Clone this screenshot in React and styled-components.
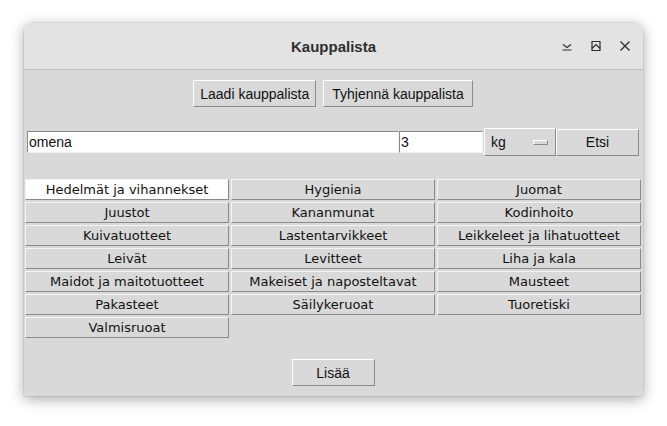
import React from "react";
import styled, { createGlobalStyle } from "styled-components";

const GlobalStyle = createGlobalStyle`
  html, body {
    margin: 0;
    padding: 0;
    background: #ffffff;
  }
`;

const categories = [
  "Hedelmät ja vihannekset",
  "Hygienia",
  "Juomat",
  "Juustot",
  "Kananmunat",
  "Kodinhoito",
  "Kuivatuotteet",
  "Lastentarvikkeet",
  "Leikkeleet ja lihatuotteet",
  "Leivät",
  "Levitteet",
  "Liha ja kala",
  "Maidot ja maitotuotteet",
  "Makeiset ja naposteltavat",
  "Mausteet",
  "Pakasteet",
  "Säilykeruoat",
  "Tuoretiski",
  "Valmisruoat",
];

function App() {
  return (
    <Page>
      <GlobalStyle />
      <Window>
        <TitleBar>
          <span />
          <Title>Kauppalista</Title>
          <Controls>
            <svg width="12" height="12" viewBox="0 0 12 12">
              <path d="M2 4.5 L6 7.5 L10 4.5 M1.5 10 H10.5" fill="none" stroke="#2e2e2e" strokeWidth="1.2" />
            </svg>
            <svg width="12" height="12" viewBox="0 0 12 12">
              <path d="M2 1.5 H10 V10.5 H2 Z M2 8.5 L6 4.5 L10 8.5" fill="none" stroke="#2e2e2e" strokeWidth="1.2" />
            </svg>
            <svg width="12" height="12" viewBox="0 0 12 12">
              <path d="M1.5 1.5 L10.5 10.5 M10.5 1.5 L1.5 10.5" fill="none" stroke="#2e2e2e" strokeWidth="1.4" />
            </svg>
          </Controls>
        </TitleBar>
        <Body>
          <TopRow>
            <Button>Laadi kauppalista</Button>
            <Button $pad={8}>Tyhjennä kauppalista</Button>
          </TopRow>
          <SearchRow>
            <Entry $width={372} defaultValue="omena" />
            <Entry $width={84} defaultValue="3" />
            <MenuButton>
              kg
              <Indicator />
            </MenuButton>
            <Button $width={83}>Etsi</Button>
          </SearchRow>
          <Grid>
            {categories.map((c, i) => (
              <Category key={c} $active={i === 0}>
                {c}
              </Category>
            ))}
          </Grid>
          <BottomRow>
            <Button $width={83}>Lisää</Button>
          </BottomRow>
        </Body>
      </Window>
    </Page>
  );
}

export default App;

const Page = styled.div`
  padding: 23px 24px 30px 24px;
`;

const Window = styled.div`
  width: 619px;
  border-radius: 8px 8px 0 0;
  overflow: hidden;
  box-shadow: 0 3px 14px rgba(0, 0, 0, 0.35), 0 0 0 1px rgba(0, 0, 0, 0.06);
`;

const TitleBar = styled.div`
  height: 46px;
  display: grid;
  grid-template-columns: 1fr auto 1fr;
  align-items: center;
  background: #e3e3e3;
  border-bottom: 1px solid #c2c2c2;
`;

const Title = styled.span`
  font-family: "Liberation Sans", sans-serif;
  font-weight: bold;
  font-size: 15px;
  color: #2e2e2e;
`;

const Controls = styled.div`
  display: flex;
  justify-content: flex-end;
  align-items: center;
  gap: 17px;
  padding-right: 12px;
`;

const Body = styled.div`
  background: #d9d9d9;
  padding: 10px 2px 10px 1px;
  display: flex;
  flex-direction: column;
`;

const TopRow = styled.div`
  display: flex;
  justify-content: center;
  gap: 7px;
`;

const Button = styled.button`
  box-sizing: border-box;
  height: 27px;
  width: ${(p) => (p.$width ? `${p.$width}px` : "auto")};
  padding: 0 ${(p) => p.$pad || 6}px;
  margin: 0;
  background: #d9d9d9;
  border: 1px solid;
  border-color: #ffffff #8a8a8a #8a8a8a #ffffff;
  font-family: "Liberation Sans", sans-serif;
  font-size: 14px;
  color: #111;
`;

const SearchRow = styled.div`
  margin-top: 21px;
  display: flex;
  align-items: center;
  height: 28px;
  padding-left: 2px;
`;

const Entry = styled.input`
  box-sizing: border-box;
  flex: none;
  width: ${(p) => p.$width}px;
  height: 22px;
  margin: 0;
  padding: 0 1px;
  background: #ffffff;
  border: 1px solid;
  border-color: #8a8a8a #f2f2f2 #f2f2f2 #8a8a8a;
  font-family: "Liberation Sans", sans-serif;
  font-size: 14px;
  color: #111;
  outline: none;
`;

const MenuButton = styled.div`
  box-sizing: border-box;
  flex: none;
  width: 72px;
  height: 28px;
  margin-left: 1px;
  padding: 0 7px 0 6px;
  display: flex;
  align-items: center;
  justify-content: space-between;
  background: #d9d9d9;
  border: 1px solid;
  border-color: #ffffff #8a8a8a #8a8a8a #ffffff;
  font-family: "Liberation Sans", sans-serif;
  font-size: 14px;
  color: #111;
`;

const Indicator = styled.span`
  width: 13px;
  height: 3px;
  border: 1px solid;
  border-color: #ffffff #8a8a8a #8a8a8a #ffffff;
`;

const Grid = styled.div`
  margin-top: 23px;
  display: grid;
  grid-template-columns: repeat(3, 204px);
  grid-auto-rows: 21px;
  gap: 2px;
`;

const Category = styled.div`
  box-sizing: border-box;
  display: flex;
  align-items: center;
  justify-content: center;
  background: ${(p) => (p.$active ? "#ffffff" : "#d9d9d9")};
  border: 1px solid;
  border-color: #f4f4f4 #8a8a8a #8a8a8a #f4f4f4;
  font-family: "DejaVu Sans", sans-serif;
  font-size: 13px;
  color: #111;
`;

const BottomRow = styled.div`
  margin-top: 21px;
  display: flex;
  justify-content: center;
`;
